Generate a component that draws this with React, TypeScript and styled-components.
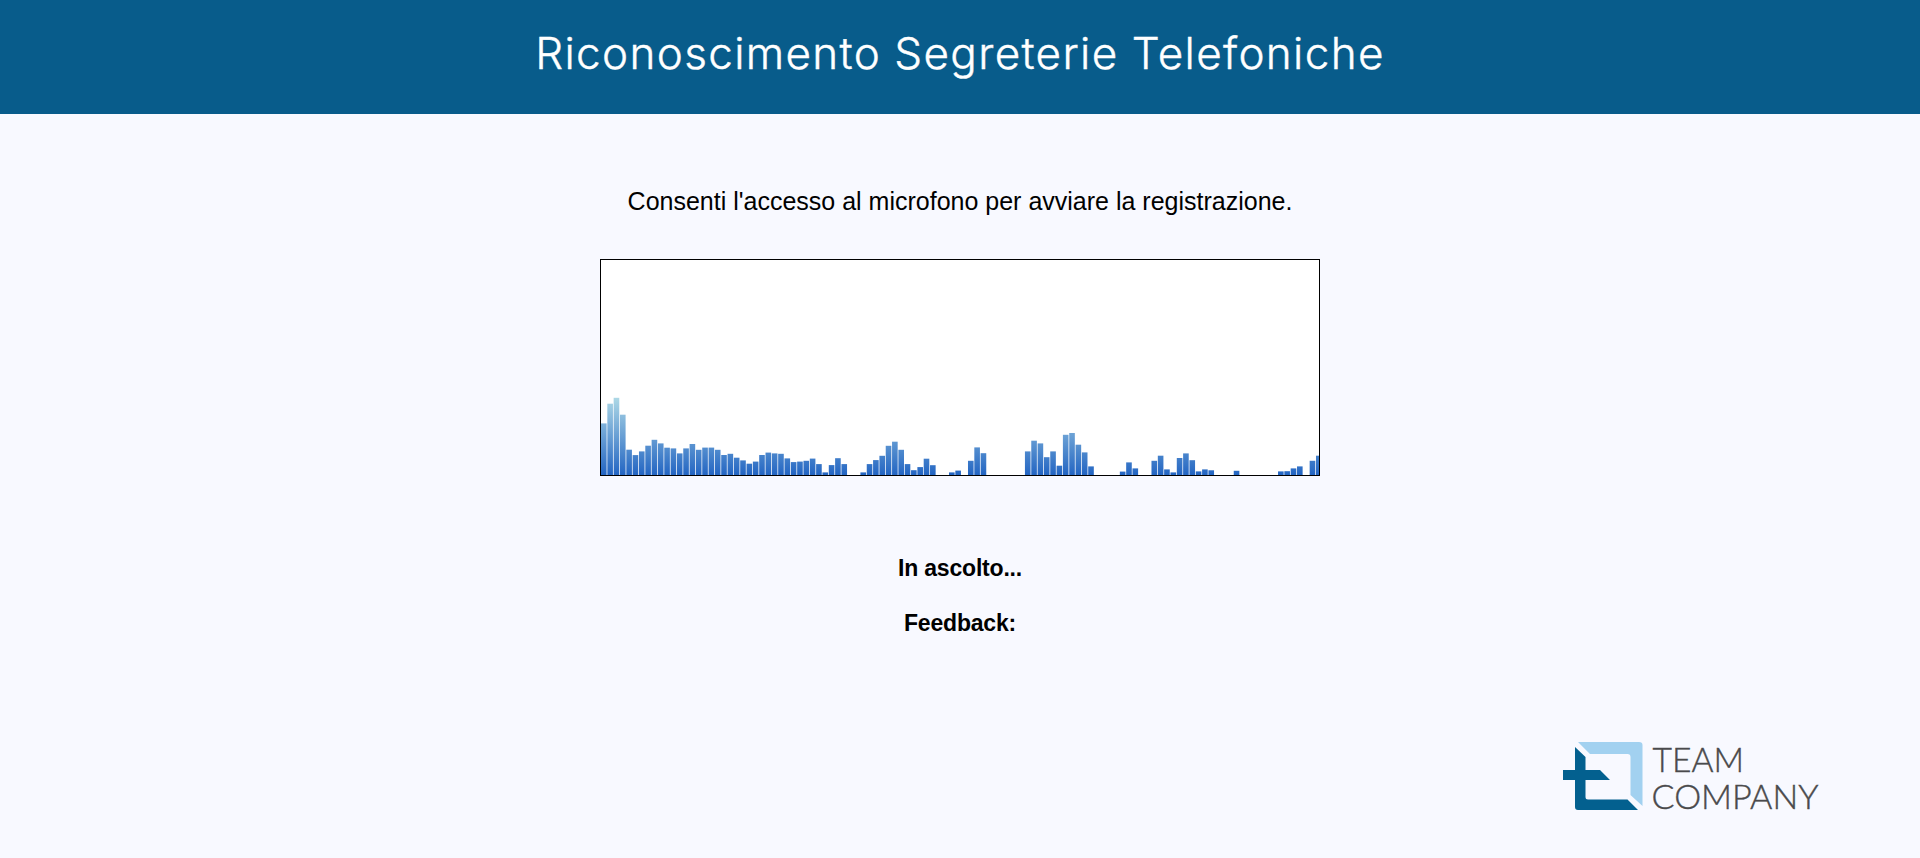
import React from "react";
import styled, { createGlobalStyle } from "styled-components";

const GlobalStyle = createGlobalStyle`
  * { box-sizing: border-box; }
  body {
    margin: 0;
    background: #f8f9ff;
    color: #000;
    font-family: Arial, "Liberation Sans", sans-serif;
  }
`;

const Page = styled.div`
  display: flex;
  flex-direction: column;
  height: 858px;
  overflow: hidden;
`;

const Header = styled.header`
  display: flex;
  justify-content: center;
  height: 114px;
  padding-top: 25px;
  background: #085c8b;
`;

const Title = styled.h1`
  margin: 0;
  color: #fff;
  font-family: "Century Gothic", Inter, sans-serif;
  font-size: 44px;
  font-weight: 300;
  line-height: 56px;
  letter-spacing: 1.35px;
  word-spacing: -0.5px;
  white-space: nowrap;
  -webkit-text-stroke: 0.4px #fff;
`;

const Main = styled.main`
  display: flex;
  flex-direction: column;
  align-items: center;
  flex: 1;
  padding-top: 73px;
`;

const Prompt = styled.p`
  margin: 0 0 43px;
  font-size: 25px;
  line-height: 29px;
`;

const Spectrum = styled.svg`
  display: block;
  width: 720px;
  height: 217.4px;
  border: 1px solid #000;
  background: #fff;
`;

const Status = styled.p<{ $top: number }>`
  margin: ${({ $top }) => $top}px 0 0;
  font-size: 23px;
  font-weight: 700;
  line-height: 27px;
  letter-spacing: -0.2px;
`;

const Footer = styled.footer`
  display: flex;
  justify-content: flex-end;
  padding: 0 97px 46px 0;
`;

const Logo = styled.svg`
  display: block;
  width: 260px;
  height: 72px;
  overflow: visible;
`;

const LogoText = styled.text`
  fill: #4a4a4c;
  stroke: #4a4a4c;
  stroke-width: 0.4px;
  font-family: "Century Gothic", Lato, sans-serif;
  font-size: 33.5px;
  font-weight: 300;
`;

const BAR_STEP = 8.8125;
const BAR_WIDTH = 7.8125;

// Level of each frequency band, in display pixels.
const levels = [
  52, 71.7, 77.6, 60.7, 25.7, 20.3, 24, 29.7, 35.6, 32, 27.7, 27, 22, 27, 31.4,
  25.6, 27.8, 27.8, 25.6, 20.4, 21.6, 17.7, 15, 11.7, 13.8, 20.4, 22.8, 22, 21.6, 17,
  13.3, 13.8, 14.6, 16.8, 11.3, 3, 10.3, 17.2, 11.3, 0, 0, 3, 11.3, 15.3,
  19.6, 29.6, 33.7, 25.6, 11.3, 5.2, 8.3, 16.7, 10.2, 0, 0, 3, 4.8, 0, 14.6,
  28, 22.2, 0, 0, 0, 0, 0, 0, 24, 34.7, 32, 18.2, 24, 9.7, 40.6, 42.4, 30.7,
  23, 9, 0, 0, 0, 0, 3.8, 13, 7, 0, 0, 14.6, 19.7, 6, 3, 17.4, 22, 15.2, 4,
  6, 5.1, 0, 0, 0, 4.6, 0, 0, 0, 0, 0, 0, 4, 4.2, 7, 9, 0, 14.6, 19.7,
];

const App: React.FC = () => (
  <>
    <GlobalStyle />
    <Page>
      <Header>
        <Title>Riconoscimento Segreterie Telefoniche</Title>
      </Header>
      <Main>
        <Prompt>Consenti l'accesso al microfono per avviare la registrazione.</Prompt>
        <Spectrum viewBox="0 0 1000 300" preserveAspectRatio="none">
          <defs>
            <linearGradient id="level" gradientUnits="userSpaceOnUse" x1="0" y1="300" x2="0" y2="192">
              <stop offset="0" stopColor="#2264c2" />
              <stop offset="1" stopColor="#add8e6" />
            </linearGradient>
          </defs>
          {levels.map((level, i) => {
            const height = level / 0.718;
            return (
              <rect key={i} x={i * BAR_STEP} y={300 - height} width={BAR_WIDTH} height={height} fill="url(#level)" />
            );
          })}
        </Spectrum>
        <Status $top={79}>In ascolto...</Status>
        <Status $top={28}>Feedback:</Status>
      </Main>
      <Footer>
        <Logo viewBox="0 0 260 72" role="img" aria-label="Team Company">
          <path fill="#a2d1f0" d="M15 2H76Q79.500 2 79.500 5V66L67.500 55V17Q67.500 14 64.500 14H27Z" />
          <path fill="#03608f" d="M12 7L22.500 17V30H37L47 40H22.500V57Q22.500 59.500 25 59.500H64.500L75 70H15Q12 70 12 67V40H0V30H12Z" />
          <LogoText x="89.500" y="32" textLength="91.500" lengthAdjust="spacingAndGlyphs">TEAM</LogoText>
          <LogoText x="88.500" y="69" textLength="167" lengthAdjust="spacingAndGlyphs">COMPANY</LogoText>
        </Logo>
      </Footer>
    </Page>
  </>
);

export default App;
